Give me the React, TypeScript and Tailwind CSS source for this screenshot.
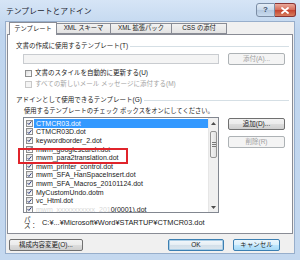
import React from "react";

const FONT = "font-['Liberation_Sans','Noto_Sans_CJK_JP',sans-serif]";

function Btn({
  children,
  className = "",
  disabled = false,
  kind = "normal",
}: {
  children: React.ReactNode;
  className?: string;
  disabled?: boolean;
  kind?: "normal" | "default" | "hot";
}) {
  let cls =
    "flex items-center justify-center rounded-[2px] border text-[6.5px] leading-none ";
  if (disabled) {
    cls += "border-[#adb2b5] bg-[#f4f4f4] text-[#a0a0a0] ";
  } else if (kind === "default") {
    cls +=
      "border-[#3c7fb1] bg-[linear-gradient(#f4f8fb,#e6eef4_50%,#d3dfe9_51%,#dde7ef)] text-[#1a1a1a] shadow-[inset_0_0_0_1px_#a9cde6] ";
  } else if (kind === "hot") {
    cls +=
      "border-[#3c7fb1] bg-[linear-gradient(#eaf6fd,#d9f0fc_50%,#bee6fd_51%,#a7d9f5)] text-[#1a1a1a] ";
  } else {
    cls +=
      "border-[#707070] bg-[linear-gradient(#f2f2f2,#ebebeb_50%,#dddddd_51%,#cfcfcf)] text-[#1a1a1a] ";
  }
  return <div className={cls + className}>{children}</div>;
}

function Check({ checked = false, disabled = false }: { checked?: boolean; disabled?: boolean }) {
  return (
    <div
      className={
        "flex h-[7px] w-[7px] shrink-0 items-center justify-center border " +
        (disabled
          ? "border-[#c8c8c8] bg-[#f4f4f4]"
          : "border-[#8e8f8f] bg-[linear-gradient(135deg,#dcdcdc,#ffffff)]")
      }
    >
      {checked && (
        <svg width="6" height="6" viewBox="0 0 6 6">
          <path d="M0.8 3.2 L2.3 4.8 L5.3 0.9" fill="none" stroke="#2b3a7a" strokeWidth="1.2" />
        </svg>
      )}
    </div>
  );
}

function GroupHeader({ children }: { children: React.ReactNode }) {
  return (
    <div className="flex h-[8px] items-center pl-[8px] pr-[3px]">
      <span className="whitespace-nowrap text-[6.5px] leading-none text-[#1a1a1a]">{children}</span>
      <div className="ml-[2px] h-px flex-1 bg-[#d5dfe5]" />
    </div>
  );
}

const items = [
  "CTMCR03.dot",
  "CTMCR03D.dot",
  "keywordborder_2.dot",
  "mwm_googlesearch.dot",
  "mwm_para2translation.dot",
  "mwm_printer_control.dot",
  "mwm_SFA_HanSpaceInsert.dot",
  "mwm_SFA_Macros_20101124.dot",
  "MyCustomUndo.dotm",
  "vc_Html.dot",
];

export default function App() {
  return (
    <div
      className={
        FONT +
        " flex h-[260px] w-[300px] flex-col overflow-hidden bg-[linear-gradient(#d6e5f6,#bfd5ee_12%,#c4d8ef)]"
      }
    >
      {/* title bar */}
      <div className="flex h-[21px] shrink-0 items-start">
        <div className="mt-[7px] pl-[6px] text-[7.8px] leading-[9px] text-[#1c2530]">
          テンプレートとアドイン
        </div>
        <div className="ml-auto mr-[4px] mt-[3px] flex">
          <div className="flex h-[14px] w-[19px] items-center justify-center rounded-l-[3px] border border-[#7b8da5] bg-[linear-gradient(#e4edf7,#c8d8ea_50%,#b4c8e0_51%,#c9dbee)] text-[8px] font-bold leading-none text-[#3d4f68]">
            ?
          </div>
          <div className="flex h-[14px] w-[21px] items-center justify-center rounded-r-[3px] border border-l-0 border-[#8a3434] bg-[linear-gradient(#e9a99b,#d46a57_50%,#c4432f_51%,#d87e5f)]">
            <svg width="8" height="7" viewBox="0 0 8 7">
              <path d="M1 1 L7 6 M7 1 L1 6" stroke="#fff" strokeWidth="1.8" strokeLinecap="round" />
            </svg>
          </div>
        </div>
      </div>

      {/* body */}
      <div className="mx-[5px] mb-[6px] flex flex-1 flex-col border border-[#97aecb] bg-[#f0f0f0]">
        {/* tabs */}
        <div className="flex h-[12px] shrink-0 items-end pl-[3px] text-[6.3px] leading-none text-[#1a1a1a]">
          <div className="relative z-10 -mb-px flex h-[13px] w-[48px] items-center justify-center border border-b-0 border-[#898c95] bg-white">
            テンプレート
          </div>
          <div className="flex h-[11px] w-[54px] items-center justify-center border border-l-0 border-[#898c95] bg-[linear-gradient(#f2f2f2,#e3e3e3)]">
            XML スキーマ
          </div>
          <div className="flex h-[11px] w-[61px] items-center justify-center border border-l-0 border-[#898c95] bg-[linear-gradient(#f2f2f2,#e3e3e3)]">
            XML 拡張パック
          </div>
          <div className="flex h-[11px] w-[55px] items-center justify-center border border-l-0 border-[#898c95] bg-[linear-gradient(#f2f2f2,#e3e3e3)]">
            CSS の添付
          </div>
        </div>

        {/* panel */}
        <div className="mx-[1px] flex flex-col border border-[#898c95] bg-white pb-[6px]">
          <div className="mt-[7px]">
            <GroupHeader>文書の作成に使用するテンプレート(T)</GroupHeader>
          </div>
          <div className="mt-[3px] flex h-[12px] items-center pl-[15px] pr-[7px]">
            <div className="h-[10px] w-[196px] border border-[#c9ccd0] bg-[#f4f4f4]" />
            <Btn disabled className="ml-auto h-[12px] w-[57px]">
              添付(A)...
            </Btn>
          </div>
          <div className="mt-[4px] flex h-[8px] items-center gap-[3px] pl-[17px] text-[6.5px] leading-none text-[#1a1a1a]">
            <Check />
            <span>文書のスタイルを自動的に更新する(U)</span>
          </div>
          <div className="mt-[3px] flex h-[8px] items-center gap-[3px] pl-[17px] text-[6.5px] leading-none text-[#a3a3a3]">
            <Check disabled />
            <span>すべての新しいメール メッセージに添付する(M)</span>
          </div>
          <div className="mt-[8px]">
            <GroupHeader>アドインとして使用できるテンプレート(G)</GroupHeader>
          </div>
          <div className="mt-[3px] h-[8px] pl-[16px] text-[6.3px] leading-[8px] text-[#1a1a1a]">
            使用するテンプレートのチェック ボックスをオンにしてください。
          </div>

          {/* list + buttons */}
          <div className="mt-[2px] flex items-start pl-[15px] pr-[7px]">
            <div className="relative flex h-[96px] w-[196px] border border-[#828790] bg-white">
              <div className="flex-1 overflow-hidden pt-px">
                {items.map((t, i) => (
                  <div key={t} className="flex h-[8.6px] items-center text-[7px] leading-none">
                    <div className="flex w-[10px] shrink-0 justify-center pl-px">
                      <Check checked />
                    </div>
                    <div
                      className={
                        "flex h-full flex-1 items-center pl-[2px] " +
                        (i === 0 ? "bg-[#3399ff] text-white" : "text-[#1a1a1a]")
                      }
                    >
                      {t}
                    </div>
                  </div>
                ))}
                <div className="flex h-[8.6px] items-center text-[7px] leading-none">
                  <div className="flex w-[10px] shrink-0 justify-center pl-px">
                    <Check checked />
                  </div>
                  <div className="flex h-full flex-1 items-center pl-[2px] text-[#1a1a1a]">
                    <span className="text-[#d8d8d8]">mwm_xxxxxxxxxxx_201</span>0(0001).dot
                  </div>
                </div>
              </div>
              {/* scrollbar */}
              <div className="flex w-[10px] shrink-0 flex-col border-l border-[#e6e6e6] bg-[#f0f0f0]">
                <div className="flex h-[10px] items-center justify-center">
                  <svg width="5" height="3" viewBox="0 0 5 3">
                    <path d="M0 3 L2.5 0 L5 3 Z" fill="#4d4d4d" />
                  </svg>
                </div>
                <div className="mx-[1px] mt-[3px] flex h-[27px] flex-col items-center justify-center gap-[1px] rounded-[2px] border border-[#959595] bg-[linear-gradient(90deg,#f3f3f3,#e2e2e2)]">
                  <div className="h-px w-[4px] bg-[#7a7a7a]" />
                  <div className="h-px w-[4px] bg-[#7a7a7a]" />
                  <div className="h-px w-[4px] bg-[#7a7a7a]" />
                </div>
                <div className="mt-auto flex h-[10px] items-center justify-center">
                  <svg width="5" height="3" viewBox="0 0 5 3">
                    <path d="M0 0 L2.5 3 L5 0 Z" fill="#4d4d4d" />
                  </svg>
                </div>
              </div>
              {/* red highlight box */}
              <div className="pointer-events-none absolute left-[-6px] top-[30px] h-[16px] w-[110px] border-2 border-[#e0242b]" />
            </div>
            <div className="ml-auto flex flex-col gap-[6px] pt-px">
              <Btn className="h-[12px] w-[57px]">追加(D)...</Btn>
              <Btn disabled className="h-[12px] w-[57px]">
                削除(R)
              </Btn>
            </div>
          </div>

          <div className="mt-[6px] flex h-[8px] items-center pl-[16px] text-[6.5px] leading-none text-[#1a1a1a]">
            <span className="w-[18px]">パス：</span>
            <span className="text-[7.4px]">C:¥...¥Microsoft¥Word¥STARTUP¥CTMCR03.dot</span>
          </div>
        </div>

        {/* bottom buttons */}
        <div className="mt-[5px] flex items-center pl-[3px]">
          <Btn className="h-[12px] w-[74px]">構成内容変更(O)...</Btn>
          <Btn kind="default" className="ml-auto h-[12px] w-[56px]">
            OK
          </Btn>
          <Btn kind="hot" className="ml-[9px] mr-[14px] h-[12px] w-[47px]">
            キャンセル
          </Btn>
        </div>
      </div>
    </div>
  );
}
